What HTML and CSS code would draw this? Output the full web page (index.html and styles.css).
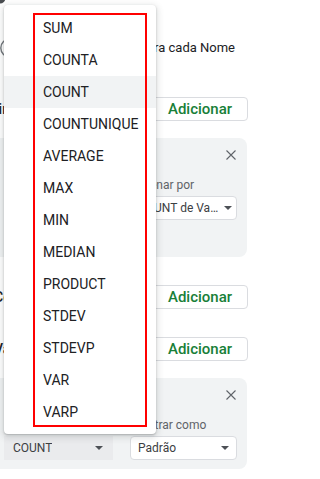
FILE: index.html
```html
<!DOCTYPE html>
<html lang="pt-BR">
<head>
<meta charset="utf-8">
<title>Editor de tabela dinâmica</title>
<link rel="stylesheet" href="styles.css">
</head>
<body>
<div class="page">
  <div class="top-bits"><svg width="8" height="4" viewBox="0 0 8 4"><circle cx="0" cy="-2" r="5.5" fill="#4a4d51"/></svg></div>

  <div class="intro">
    <svg class="intro-icon" width="20" height="20" viewBox="0 0 20 20"><circle cx="10" cy="10" r="9.2" fill="none" stroke="#70757a" stroke-width="1.4"/></svg>
    <span class="intro-text">Mostrar totais para cada Nome</span>
  </div>

  <div class="row row-first">
    <span class="row-label">Linhas</span>
    <button class="add-btn">Adicionar</button>
  </div>

  <div class="card card-rows">
    <div class="card-head">
      <svg class="close" width="10" height="10" viewBox="0 0 10 10"><path d="M0.5 0.5 L9.5 9.5 M9.5 0.5 L0.5 9.5" stroke="#5f6368" stroke-width="1.1" fill="none"/></svg>
    </div>
    <div class="card-grid">
      <div class="field">
        <span class="field-label">Ordem</span>
        <div class="select select-white"><span class="select-text">Crescente</span><span class="caret"></span></div>
      </div>
      <div class="field">
        <span class="field-label">Ordenar por</span>
        <div class="select select-white select-sort"><span class="select-text">COUNT de Valor</span><span class="caret"></span></div>
      </div>
    </div>
  </div>

  <div class="row row-gap">
    <span class="row-label">Colunas</span>
    <button class="add-btn">Adicionar</button>
  </div>

  <div class="row row-gap2">
    <span class="row-label">Valores</span>
    <button class="add-btn">Adicionar</button>
  </div>

  <div class="card card-values">
    <div class="card-head">
      <svg class="close" width="10" height="10" viewBox="0 0 10 10"><path d="M0.5 0.5 L9.5 9.5 M9.5 0.5 L0.5 9.5" stroke="#5f6368" stroke-width="1.1" fill="none"/></svg>
    </div>
    <div class="card-grid">
      <div class="field">
        <span class="field-label">Resumir por</span>
        <div class="select select-active"><span class="select-text">COUNT</span><span class="caret"></span></div>
      </div>
      <div class="field">
        <span class="field-label">Mostrar como</span>
        <div class="select select-white select-show"><span class="select-text">Padrão</span><span class="caret"></span></div>
      </div>
    </div>
  </div>
</div>

<ul class="menu">
  <li class="menu-item">SUM</li>
  <li class="menu-item">COUNTA</li>
  <li class="menu-item is-selected">COUNT</li>
  <li class="menu-item">COUNTUNIQUE</li>
  <li class="menu-item">AVERAGE</li>
  <li class="menu-item">MAX</li>
  <li class="menu-item">MIN</li>
  <li class="menu-item">MEDIAN</li>
  <li class="menu-item">PRODUCT</li>
  <li class="menu-item">STDEV</li>
  <li class="menu-item">STDEVP</li>
  <li class="menu-item">VAR</li>
  <li class="menu-item">VARP</li>
</ul>
<div class="highlight-box"></div>
</body>
</html>
```

FILE: styles.css
```css
* { box-sizing: border-box; }

html, body {
  margin: 0;
  padding: 0;
  background: #ffffff;
}

body {
  width: 256px;
  height: 479px;
  overflow: hidden;
  position: relative;
  font-family: Roboto, "Noto Sans", Arial, sans-serif;
  color: #202124;
}

.page {
  display: flex;
  flex-direction: column;
  width: 256px;
}

.top-bits {
  height: 4px;
  overflow: hidden;
  display: flex;
}

.intro {
  margin-top: 34px;
  height: 20px;
  display: flex;
  align-items: center;
  justify-content: space-between;
  padding-right: 21px;
}

.intro-icon { flex: none; }

.intro-text {
  font-size: 13px;
  line-height: 20px;
  white-space: nowrap;
  color: #202124;
}

.row {
  height: 24px;
  display: flex;
  align-items: center;
  justify-content: space-between;
  padding-right: 8px;
}

.row-first { margin-top: 39px; }
.row-gap { margin-top: 28px; }
.row-gap2 { margin-top: 28px; }

.row-label {
  margin-left: -6px;
  font-size: 14px;
  font-weight: 500;
  color: #202124;
}

.row-first .row-label { margin-left: -9px; }

.add-btn {
  width: 96px;
  height: 24px;
  border: 1px solid #dadce0;
  border-radius: 4px;
  background: #ffffff;
  font-family: Roboto, Arial, sans-serif;
  font-size: 15px;
  font-weight: 500;
  color: #188038;
  padding: 0;
  line-height: 22px;
}

.card {
  margin-left: -8px;
  width: 255px;
  background: #f1f3f4;
  border-radius: 8px;
  padding: 12px 10px 0 12px;
  margin-top: 17px;
}

.card-rows { height: 119px; }
.card-values { height: 91px; }

.card-head {
  height: 10px;
  display: flex;
  justify-content: flex-end;
  padding-right: 1px;
}

.close { display: block; }

.card-grid {
  margin-top: 17px;
  display: grid;
  grid-template-columns: 109px 107px;
  column-gap: 17px;
}

.field {
  display: flex;
  flex-direction: column;
}

.field-label {
  font-size: 12px;
  line-height: 16px;
  color: #5f6368;
  padding-left: 1px;
  white-space: nowrap;
}

.select {
  margin-top: 3px;
  height: 24px;
  display: flex;
  align-items: center;
  justify-content: space-between;
  padding: 0 10px 0 9px;
  border-radius: 4px;
  font-size: 12px;
  color: #3c4043;
}

.select-white {
  background: #ffffff;
  border: 1px solid #dadce0;
  padding: 0 7px 0 7px;
}

.select-active {
  background: #eaebed;
  border-radius: 0;
}

.select-sort { padding-right: 4px; }
.select-sort .caret { margin-left: 0; }
.select-sort .select-text { max-width: 82px; }

.select-text {
  white-space: nowrap;
  overflow: hidden;
  text-overflow: ellipsis;
}

.caret {
  flex: none;
  width: 0;
  height: 0;
  border-left: 4px solid transparent;
  border-right: 4px solid transparent;
  border-top: 4px solid #4d5156;
  margin-left: 6px;
}

.menu {
  position: absolute;
  left: 4px;
  top: 5px;
  width: 152px;
  height: 429px;
  margin: 0;
  padding: 7px 0 6px 0;
  list-style: none;
  background: #ffffff;
  border-radius: 4px;
  box-shadow: 0 1px 2px rgba(60, 64, 67, 0.3), 0 2px 6px 2px rgba(60, 64, 67, 0.15);
}

.menu-item {
  height: 32px;
  line-height: 32px;
  padding-left: 39px;
  font-size: 14px;
  color: #202124;
  white-space: nowrap;
}

.menu-item.is-selected { background: #f1f3f4; }

.highlight-box {
  position: absolute;
  left: 33px;
  top: 13px;
  width: 114px;
  height: 414px;
  border: 2px solid #ff0000;
}
```
